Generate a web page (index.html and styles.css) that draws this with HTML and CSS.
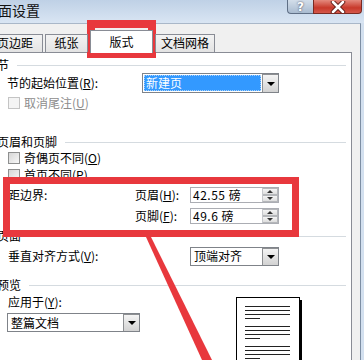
FILE: index.html
```html
<!DOCTYPE html>
<html lang="zh-CN">
<head>
    <meta charset="UTF-8">
    <meta name="viewport" content="width=device-width, initial-scale=1.0">
    <title>页面设置</title>
    <link rel="stylesheet" href="styles.css">
</head>
<body>
<div class="window">
    <!-- 标题栏 -->
    <div class="titlebar">
        <div class="title">面设置</div>
        <div class="caption-buttons">
            <div class="btn-help">?</div>
            <div class="btn-close">
                <svg width="16" height="12" viewBox="0 0 16 12">
                    <path d="M3 1 L13 11 M13 1 L3 11" stroke="#5a1a14" stroke-width="4.5" stroke-linecap="round"/>
                    <path d="M3 1 L13 11 M13 1 L3 11" stroke="#fff" stroke-width="2.6" stroke-linecap="round"/>
                </svg>
            </div>
        </div>
    </div>

    <div class="client">
        <!-- 选项卡 -->
        <div class="tabs">
            <div class="tab tab-margins">页边距</div>
            <div class="tab tab-paper">纸张</div>
            <div class="tab tab-layout active">版式</div>
            <div class="tab tab-grid">文档网格</div>
        </div>

        <div class="panel">
            <!-- 节 -->
            <div class="sec-head head-section"><span>节</span><i class="rule"></i></div>
            <div class="row row-start">
                <span class="label label-start">节的起始位置(<u>R</u>):</span>
                <div class="combo combo-start">
                    <div class="combo-value selected"><span>新建页</span></div>
                    <div class="combo-btn"></div>
                </div>
            </div>
            <div class="row">
                <span class="check disabled"></span>
                <span class="label muted">取消尾注(<u>U</u>)</span>
            </div>

            <!-- 页眉和页脚 -->
            <div class="sec-head head-hf"><span>页眉和页脚</span><i class="rule"></i></div>
            <div class="check-row">
                <span class="check"></span>
                <span class="label">奇偶页不同(<u>O</u>)</span>
            </div>
            <div class="check-row">
                <span class="check"></span>
                <span class="label">首页不同(<u>P</u>)</span>
            </div>
            <div class="row row-edge">
                <span class="label label-edge">距边界:</span>
                <span class="label label-field">页眉(<u>H</u>):</span>
                <div class="spin">
                    <div class="spin-value">42.55 磅</div>
                    <div class="spin-btns"><i class="up"></i><i class="down"></i></div>
                </div>
            </div>
            <div class="row row-footer">
                <span class="label label-edge"></span>
                <span class="label label-field">页脚(<u>F</u>):</span>
                <div class="spin">
                    <div class="spin-value">49.6 磅</div>
                    <div class="spin-btns"><i class="up"></i><i class="down"></i></div>
                </div>
            </div>

            <!-- 页面 -->
            <div class="sec-head head-page"><span>页面</span><i class="rule"></i></div>
            <div class="row row-valign">
                <span class="label label-valign">垂直对齐方式(<u>V</u>):</span>
                <div class="combo combo-valign">
                    <div class="combo-value"><span>顶端对齐</span></div>
                    <div class="combo-btn"></div>
                </div>
            </div>

            <!-- 预览 -->
            <div class="sec-head head-preview"><span>预览</span><i class="rule"></i></div>
            <div class="preview">
                <div class="preview-left">
                    <div class="label apply-label">应用于(<u>Y</u>):</div>
                    <div class="combo combo-apply">
                        <div class="combo-value"><span>整篇文档</span></div>
                        <div class="combo-btn"></div>
                    </div>
                </div>
                <svg class="page" width="68" height="66" viewBox="0 0 68 66">
                    <rect x="3" y="3" width="63" height="70" fill="#000"/>
                    <rect x="0.5" y="0.5" width="63" height="70" fill="#fff" stroke="#000"/>
                    <g stroke="#222" stroke-width="1.2">
                        <path d="M9 9.5H54 M9 13.5H54 M9 17.5H54 M9 21.5H24"/>
                        <path d="M9 29.5H54 M9 33.5H54 M9 37.5H54 M9 41.5H24"/>
                        <path d="M9 49.5H54 M9 53.5H54 M9 57.5H54 M9 61.5H24"/>
                    </g>
                </svg>
            </div>
        </div>
    </div>

    <!-- 红色标注 -->
    <div class="mark mark-tab"></div>
    <div class="mark mark-edge"></div>
    <svg class="arrow" width="364" height="360" viewBox="0 0 364 360">
        <polygon points="146,237 151,237 212,360 202,360" fill="#e8383d"/>
    </svg>
</div>
</body>
</html>
```

FILE: styles.css
```css
html, body {
    margin: 0;
    padding: 0;
}

body {
    width: 364px;
    height: 360px;
    overflow: hidden;
    background-color: #d3e0ef;
    font-family: "Noto Sans CJK SC", "Liberation Sans", sans-serif;
    font-size: 12px;
    color: #000;
}

.window {
    position: relative;
    width: 364px;
    height: 360px;
}

/* 标题栏 */
.titlebar {
    height: 23px;
    display: flex;
    justify-content: space-between;
    align-items: flex-start;
    background: linear-gradient(to bottom, #bfd1e6, #d9e5f3);
}

.title {
    font-size: 14px;
    line-height: 20px;
    margin-left: -2px;
    color: #111;
}

.caption-buttons {
    display: flex;
    margin-right: 2px;
}

.btn-help, .btn-close {
    height: 14px;
    box-sizing: border-box;
    border: 1px solid #5f6f86;
    border-top: none;
    display: flex;
    align-items: center;
    justify-content: center;
}

.btn-help {
    width: 26px;
    border-radius: 0 0 0 4px;
    border-right: none;
    background: linear-gradient(to bottom, #d3deea, #a9bbd0);
    font-family: "DejaVu Sans", sans-serif;
    font-weight: bold;
    font-size: 12px;
    line-height: 12px;
    color: #fff;
    text-shadow: 0 0 2px #334;
}

.btn-close {
    width: 49px;
    border-radius: 0 0 4px 0;
    border-color: #7a2a22;
    background: linear-gradient(to bottom, #e48a7e, #c8392b 60%, #d5574a);
}

/* 对话框区域 */
.client {
    width: 361px;
    height: 337px;
    box-sizing: border-box;
    background-color: #f0f0f0;
    border-top: 1px solid #a9b7c8;
    border-right: 1px solid #7d8ea3;
    padding-top: 10px;
    overflow: hidden;
}

.tabs {
    display: flex;
    align-items: flex-end;
    gap: 2px;
    margin-left: -13px;
    height: 18px;
    position: relative;
    z-index: 1;
}

.tab {
    height: 18px;
    box-sizing: border-box;
    border: 1px solid #898c95;
    border-bottom: none;
    background: linear-gradient(to bottom, #f3f3f3, #e3e3e3);
    line-height: 16px;
    text-align: center;
}

.tab-margins { width: 56px; }
.tab-paper { width: 43px; }
.tab-layout { width: 63px; }
.tab-grid { width: 60px; }

.tab.active {
    height: 23px;
    margin-bottom: -1px;
    background: #fff;
    line-height: 22px;
}

.panel {
    width: 362px;
    height: 320px;
    margin-left: -10px;
    box-sizing: border-box;
    border: 1px solid #898c95;
    background-color: #fff;
    padding: 5px 5px 0 6px;
}

.sec-head {
    height: 14px;
    display: flex;
    align-items: center;
    line-height: 14px;
}

.rule {
    flex: 1;
    height: 1px;
    margin-left: 8px;
    background-color: #d5dbe0;
}

.head-hf { margin-top: 22px; }
.head-page { margin-top: 3px; }
.head-preview { margin-top: 12px; }

.row {
    height: 20px;
    display: flex;
    align-items: center;
    margin-left: 11px;
}

.row-start { margin-left: 10px; margin-top: 1px; }
.row-edge { margin-top: 2px; }
.row-footer { margin-top: 1px; }
.row-valign { margin-top: 3px; }

.check-row {
    height: 17px;
    display: flex;
    align-items: center;
    margin-left: 11px;
}

.label {
    line-height: 14px;
    white-space: nowrap;
}

.label u {
    text-decoration: underline;
}

.muted {
    color: #8d8d8d;
}

.label-start { width: 135px; }
.label-edge { width: 127px; }
.label-field { width: 55px; }
.label-valign { width: 182px; }

/* 复选框 */
.check {
    width: 12px;
    height: 12px;
    box-sizing: border-box;
    border: 1px solid #8e8f8f;
    background: linear-gradient(135deg, #d6d6d6, #f8f8f8);
    margin-right: 4px;
}

.check.disabled {
    border-color: #c4c4c4;
    background: #f4f4f4;
}

/* 下拉框 */
.combo {
    display: flex;
    height: 20px;
    box-sizing: border-box;
    border: 1px solid #7f8389;
    background-color: #fff;
}

.combo-start { width: 137px; }
.combo-valign { width: 89px; height: 19px; }
.combo-apply { width: 133px; height: 19px; margin-top: 4px; }

.combo-value {
    flex: 1;
    display: flex;
    align-items: center;
    padding-left: 3px;
    line-height: 14px;
}

.combo-value.selected {
    margin: 1px;
    padding-left: 2px;
    background-color: #3399ff;
    color: #fff;
    outline: 1px dotted #a8d0f8;
    outline-offset: -1px;
}

.combo-btn {
    width: 16px;
    box-sizing: border-box;
    border: 1px solid #8d8f92;
    border-right: none;
    border-bottom: none;
    background: linear-gradient(to bottom, #f4f4f4, #d2d2d2);
    display: flex;
    align-items: center;
    justify-content: center;
}

.combo-btn::after {
    content: "";
    border-top: 4px solid #000;
    border-left: 4px solid transparent;
    border-right: 4px solid transparent;
}

/* 数值框 */
.spin {
    display: flex;
    width: 89px;
    height: 16px;
    box-sizing: border-box;
    border: 1px solid #abadb3;
    background-color: #fff;
}

.spin-value {
    flex: 1;
    padding-left: 2px;
    line-height: 14px;
    letter-spacing: 0.5px;
}

.spin-btns {
    width: 15px;
    display: flex;
    flex-direction: column;
    border-left: 1px solid #c6c8cc;
}

.spin-btns i {
    flex: 1;
    display: flex;
    align-items: center;
    justify-content: center;
    background: linear-gradient(to bottom, #f4f4f4, #dedede);
    border: 1px solid #b5b7ba;
    border-left: none;
}

.spin-btns .up::after {
    content: "";
    border-bottom: 3px solid #333;
    border-left: 3px solid transparent;
    border-right: 3px solid transparent;
}

.spin-btns .down::after {
    content: "";
    border-top: 3px solid #333;
    border-left: 3px solid transparent;
    border-right: 3px solid transparent;
}

/* 预览 */
.preview {
    display: flex;
    margin-left: 10px;
}

.preview-left {
    width: 229px;
}

.apply-label {
    height: 14px;
    margin-top: 3px;
    margin-left: 1px;
}

.page {
    margin-top: 5px;
    display: block;
}

/* 红色标注 */
.mark {
    position: absolute;
    box-sizing: border-box;
    border: 8px solid #e8383d;
}

.mark-tab {
    left: 87px;
    top: 20px;
    width: 69px;
    height: 38px;
}

.mark-edge {
    left: 3px;
    top: 177px;
    width: 296px;
    height: 60px;
    border-width: 7px;
}

.arrow {
    position: absolute;
    left: 0;
    top: 0;
    pointer-events: none;
}
```
